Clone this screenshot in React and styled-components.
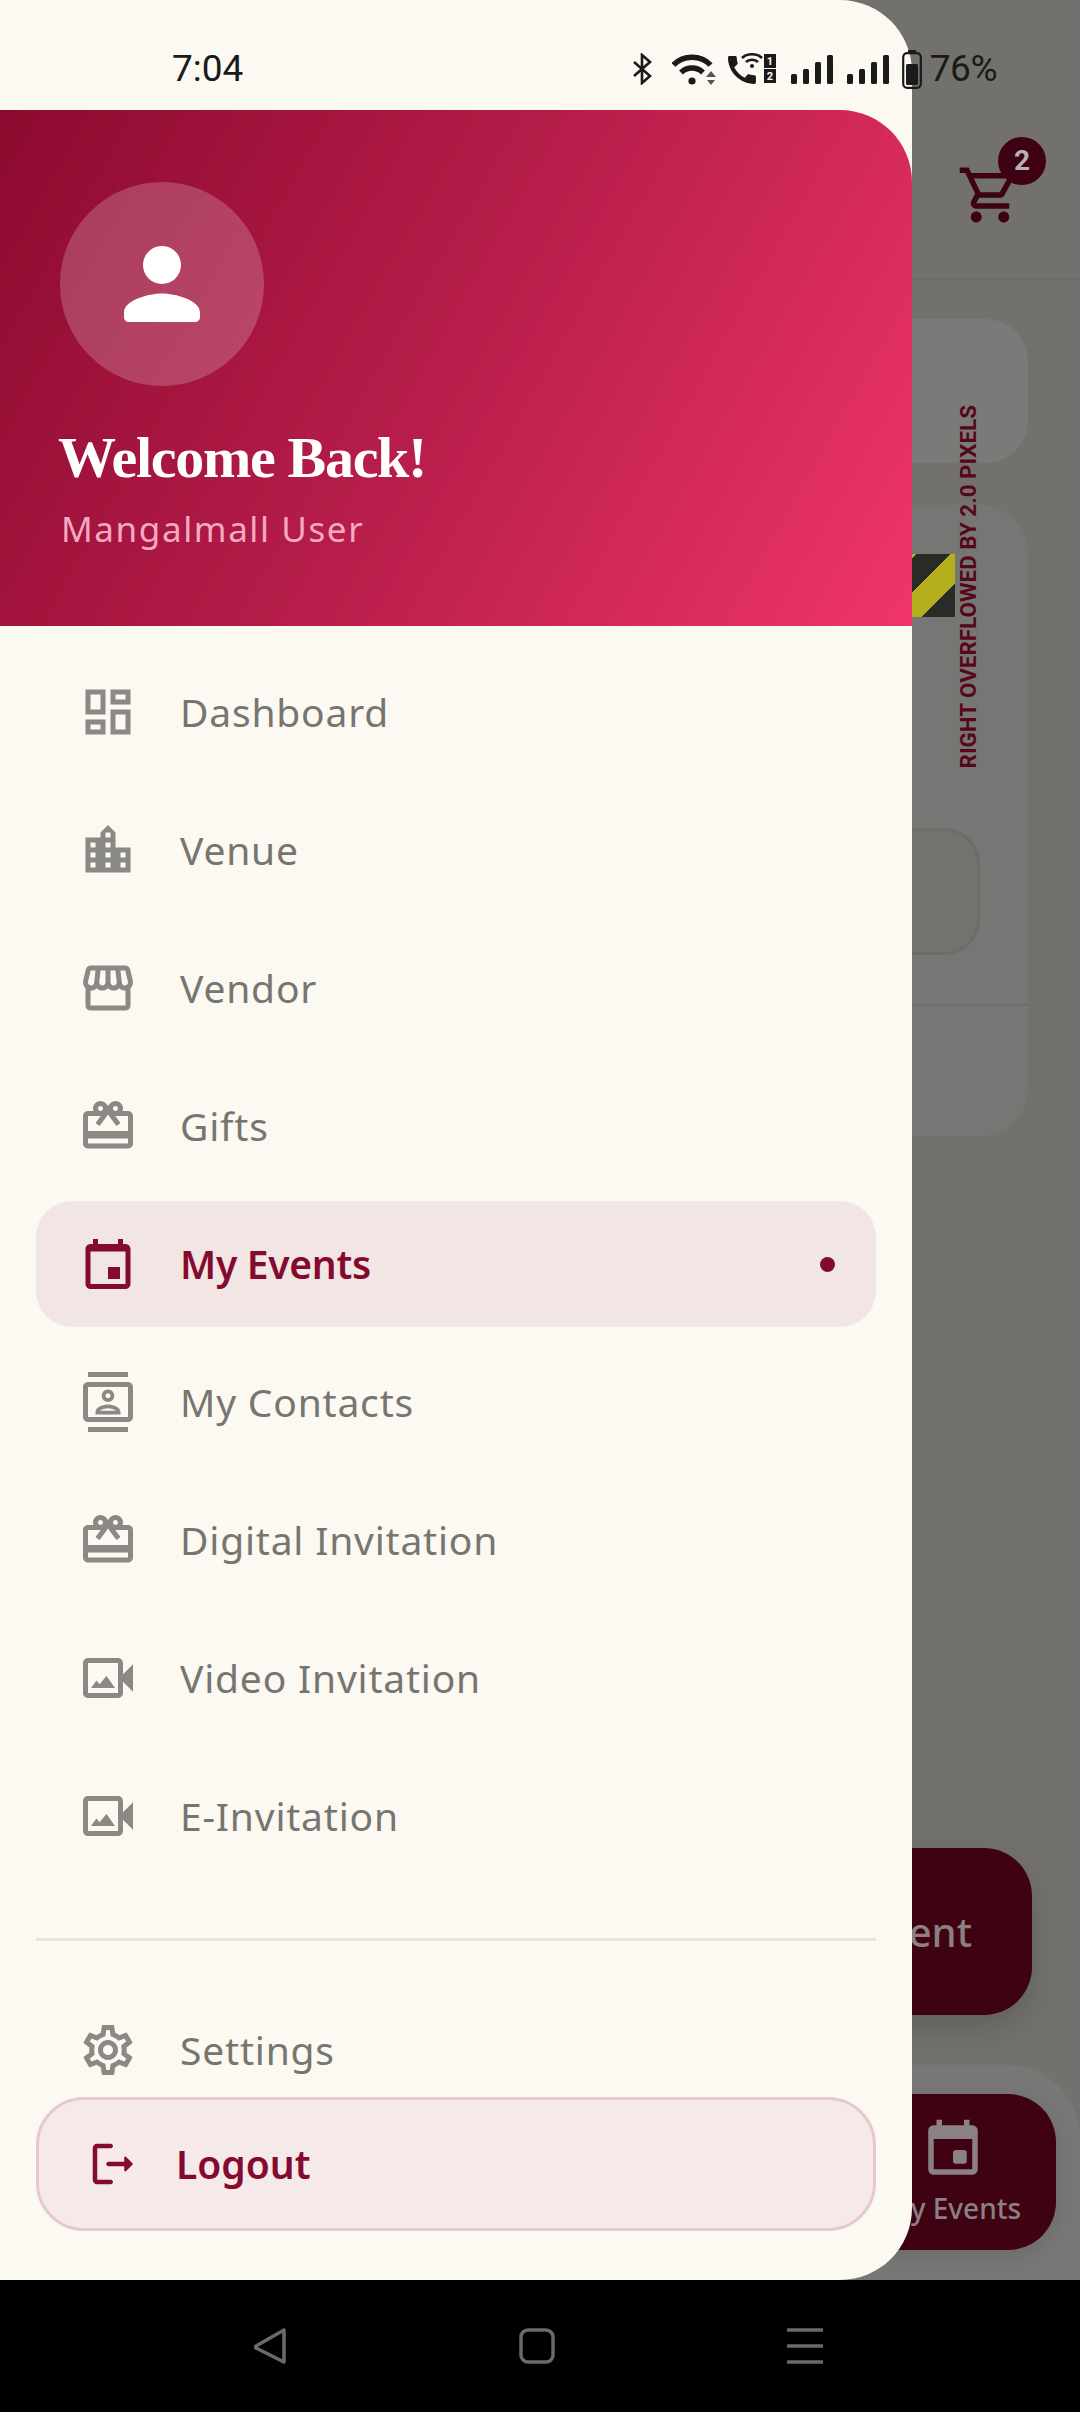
import React from "react";
import styled, { createGlobalStyle } from "styled-components";

const GlobalStyle = createGlobalStyle`
  html, body {
    margin: 0;
    padding: 0;
    background: #000;
    font-family: "Noto Sans", sans-serif;
  }
`;

const ICONS = {
  dashboard: "M19 5v2h-4V5h4M9 5v6H5V5h4m10 8v6h-4v-6h4M9 17v2H5v-2h4M21 3h-8v6h8V3zM11 3H3v10h8V3zm10 8h-8v10h8V11zm-10 4H3v6h8v-6z",
  venue: "M15 11V5l-3-3-3 3v2H3v14h18V11h-6zm-8 8H5v-2h2v2zm0-4H5v-2h2v2zm0-4H5V9h2v2zm6 8h-2v-2h2v2zm0-4h-2v-2h2v2zm0-4h-2V9h2v2zm0-4h-2V5h2v2zm6 12h-2v-2h2v2zm0-4h-2v-2h2v2z",
  store: "M21.9 8.89l-1.05-4.37c-.22-.9-1-1.52-1.91-1.52H5.05c-.9 0-1.69.63-1.9 1.52L2.1 8.89c-.24 1.02-.02 2.06.62 2.88.08.11.19.19.28.29V19c0 1.1.9 2 2 2h14c1.1 0 2-.9 2-2v-6.94c.09-.09.2-.18.28-.28.64-.82.87-1.87.62-2.89zm-2.99-3.9l1.05 4.37c.1.42.01.84-.25 1.17-.14.18-.44.47-.94.47-.61 0-1.14-.49-1.21-1.14L16.98 5l1.93-.01zM13 5h1.96l.54 4.52c.05.39-.07.78-.33 1.07-.22.26-.54.41-.95.41-.67 0-1.22-.59-1.22-1.31V5zM8.49 9.52L9.04 5H11v4.69c0 .72-.55 1.31-1.29 1.31-.34 0-.65-.15-.89-.41-.25-.29-.37-.68-.33-1.07zm-4.45-.16L5.05 5h1.97l-.58 4.86c-.08.65-.6 1.14-1.21 1.14-.49 0-.8-.29-.93-.47-.27-.32-.36-.75-.26-1.17zM5 19v-6.03c.08.01.15.03.23.03.87 0 1.66-.36 2.24-.95.6.6 1.4.95 2.31.95.87 0 1.65-.36 2.23-.93.59.57 1.39.93 2.29.93.84 0 1.64-.35 2.24-.95.58.59 1.37.95 2.24.95.08 0 .15-.02.23-.03V19H5z",
  gift: "M20 6h-2.18c.11-.31.18-.65.18-1 0-1.66-1.34-3-3-3-1.05 0-1.96.54-2.5 1.35l-.5.67-.5-.68C10.96 2.54 10.05 2 9 2 7.34 2 6 3.34 6 5c0 .35.07.69.18 1H4c-1.11 0-1.99.89-1.99 2L2 19c0 1.11.89 2 2 2h16c1.11 0 2-.89 2-2V8c0-1.11-.89-2-2-2zm-5-2c.55 0 1 .45 1 1s-.45 1-1 1-1-.45-1-1 .45-1 1-1zM9 4c.55 0 1 .45 1 1s-.45 1-1 1-1-.45-1-1 .45-1 1-1zm11 15H4v-2h16v2zm0-5H4V8h5.08L7 10.83 8.62 12 11 8.76l1-1.36 1 1.36L15.38 12 17 10.83 14.92 8H20v6z",
  event: "M16 2v2H8V2H6v2H5c-1.1 0-2 .9-2 2v14c0 1.1.9 2 2 2h14c1.1 0 2-.9 2-2V6c0-1.1-.9-2-2-2h-1V2h-2zM5 7h14v13H5V7zM12 13.2h4.8V18H12z",
  contacts: "M20 0H4v2h16V0zM4 24h16v-2H4v2zM20 4H4c-1.1 0-2 .9-2 2v12c0 1.1.9 2 2 2h16c1.1 0 2-.9 2-2V6c0-1.1-.9-2-2-2zm0 14H4V6h16v12zm-8-6c1.38 0 2.5-1.12 2.5-2.5S13.38 7 12 7 9.5 8.12 9.5 9.5 10.62 12 12 12zm0-3.5c.55 0 1 .45 1 1s-.45 1-1 1-1-.45-1-1 .45-1 1-1zm5 7.49C17 13.9 13.69 13 12 13s-5 .9-5 2.99V17h10v-1.01zm-8.19-.49c.61-.52 2.03-1 3.19-1 1.17 0 2.59.48 3.2 1H8.81z",
  video: "M18 10.48V6c0-1.1-.9-2-2-2H4c-1.1 0-2 .9-2 2v12c0 1.1.9 2 2 2h12c1.1 0 2-.9 2-2v-4.48l4 3.98v-11l-4 3.98zM16 18H4V6h12v12zM5.2 16l2.2-3 1.2 1.5 2.8-3.3 3.4 4.8z",
  settings: "M19.43 12.98c.04-.32.07-.64.07-.98 0-.34-.03-.66-.07-.98l2.11-1.65c.19-.15.24-.42.12-.64l-2-3.46c-.09-.16-.26-.25-.44-.25-.06 0-.12.01-.17.03l-2.49 1c-.52-.4-1.08-.73-1.69-.98l-.38-2.65C14.46 2.18 14.25 2 14 2h-4c-.25 0-.46.18-.49.42l-.38 2.65c-.61.25-1.17.59-1.69.98l-2.49-1c-.06-.02-.12-.03-.18-.03-.17 0-.34.09-.43.25l-2 3.46c-.13.22-.07.49.12.64l2.11 1.65c-.04.32-.07.65-.07.98 0 .33.03.66.07.98l-2.11 1.65c-.19.15-.24.42-.12.64l2 3.46c.09.16.26.25.44.25.06 0 .12-.01.17-.03l2.49-1c.52.4 1.08.73 1.69.98l.38 2.65c.03.24.24.42.49.42h4c.25 0 .46-.18.49-.42l.38-2.65c.61-.25 1.17-.59 1.69-.98l2.49 1c.06.02.12.03.18.03.17 0 .34-.09.43-.25l2-3.46c.12-.22.07-.49-.12-.64l-2.11-1.65zm-1.98-1.71c.04.31.05.52.05.73 0 .21-.02.43-.05.73l-.14 1.13.89.7 1.08.84-.7 1.21-1.27-.51-1.04-.42-.9.68c-.43.32-.84.56-1.25.73l-1.06.43-.16 1.13-.2 1.35h-1.4l-.19-1.35-.16-1.13-1.06-.43c-.43-.18-.83-.41-1.23-.71l-.91-.7-1.06.43-1.27.51-.7-1.21 1.08-.84.89-.7-.14-1.13c-.03-.31-.05-.54-.05-.74s.02-.43.05-.73l.14-1.13-.89-.7-1.08-.84.7-1.21 1.27.51 1.04.42.9-.68c.43-.32.84-.56 1.25-.73l1.06-.43.16-1.13.2-1.35h1.39l.19 1.35.16 1.13 1.06.43c.43.18.83.41 1.23.71l.91.7 1.06-.43 1.27-.51.7 1.21-1.07.85-.89.7.14 1.13zM12 8c-2.21 0-4 1.79-4 4s1.79 4 4 4 4-1.79 4-4-1.79-4-4-4zm0 6c-1.1 0-2-.9-2-2s.9-2 2-2 2 .9 2 2-.9 2-2 2z",
  person: "M12 12c2.21 0 4-1.79 4-4s-1.79-4-4-4-4 1.79-4 4 1.79 4 4 4zm0 2c-2.67 0-8 1.34-8 4v1c0 .55.45 1 1 1h14c.55 0 1-.45 1-1v-1c0-2.66-5.33-4-8-4z",
  logout: "M5 5h6c.55 0 1-.45 1-1s-.45-1-1-1H5c-1.1 0-2 .9-2 2v14c0 1.1.9 2 2 2h6c.55 0 1-.45 1-1s-.45-1-1-1H5V5zM20.65 11.65l-2.79-2.79c-.32-.32-.86-.1-.86.35V11h-7c-.55 0-1 .45-1 1s.45 1 1 1h7v1.79c0 .45.54.67.85.35l2.79-2.79c.2-.19.2-.51.01-.7z",
  cart: "M15.55 13c.75 0 1.41-.41 1.75-1.03l3.58-6.49c.37-.66-.11-1.48-.87-1.48H5.21l-.94-2H1v2h2l3.6 7.59-1.35 2.44C4.52 15.37 5.48 17 7 17h12v-2H7l1.1-2h7.45zM6.16 6h12.15l-2.76 5H8.53L6.16 6zM7 18c-1.1 0-1.99.9-1.99 2S5.9 22 7 22s2-.9 2-2-.9-2-2-2zm10 0c-1.1 0-1.99.9-1.99 2s.89 2 1.99 2 2-.9 2-2-.9-2-2-2z",
  phone: "M20.01 15.38c-1.23 0-2.42-.2-3.53-.56-.35-.12-.74-.03-1.01.24l-1.57 1.97c-2.83-1.35-5.48-3.9-6.89-6.83l1.95-1.66c.27-.28.35-.67.24-1.02-.37-1.11-.56-2.3-.56-3.53 0-.54-.45-.99-.99-.99H4.19C3.65 3 3 3.24 3 3.99 3 13.28 10.73 21 20.01 21c.71 0 .99-.63.99-1.18v-3.45c0-.54-.45-.99-.99-.99z",
};

const MENU = [
  { label: "Dashboard", icon: "dashboard" },
  { label: "Venue", icon: "venue" },
  { label: "Vendor", icon: "store" },
  { label: "Gifts", icon: "gift" },
  { label: "My Events", icon: "event", active: true },
  { label: "My Contacts", icon: "contacts" },
  { label: "Digital Invitation", icon: "gift" },
  { label: "Video Invitation", icon: "video" },
  { label: "E-Invitation", icon: "video" },
];

const SIGNAL_BARS = [10, 15, 22, 29];

const Screen = styled.div`
  position: relative;
  width: 1080px;
  height: 2412px;
  overflow: hidden;
  display: flex;
  flex-direction: column;
`;

/* page under the drawer */
const Backdrop = styled.div`
  height: 2280px;
  background: #72716d;
  display: flex;
  flex-direction: column;
`;
const TopBar = styled.div`
  height: 280px;
  border-bottom: 2px solid #6c6b67;
  flex-shrink: 0;
  display: flex;
  justify-content: flex-end;
  padding: 162px 57px 0 0;
  box-sizing: border-box;
`;
const CartBox = styled.div`
  position: relative;
  width: 66px;
  height: 66px;
`;
const CartIcon = styled.svg`
  display: block;
  width: 66px;
  height: 66px;
  fill: #3f0213;
`;
const Badge = styled.span`
  position: absolute;
  left: 41px;
  top: -25px;
  width: 48px;
  height: 48px;
  border-radius: 50%;
  background: #3f0213;
  color: #b5b3b1;
  font: 700 28px/48px "Roboto", sans-serif;
  text-align: center;
`;
const Cards = styled.div`
  display: flex;
  flex-direction: column;
  align-items: flex-end;
  gap: 42px;
  padding: 39px 52px 0 0;
`;
const SmallCard = styled.div`
  width: 900px;
  height: 144px;
  border-radius: 42px;
  background: #7a7a78;
`;
const BigCard = styled.div`
  position: relative;
  width: 900px;
  height: 631px;
  border-radius: 48px;
  background: #767674;
  display: flex;
  flex-direction: column;
  align-items: flex-end;
`;
const InputBox = styled.div`
  width: 800px;
  height: 127px;
  margin: 323px 48px 0 0;
  border: 3px solid #6d6c69;
  border-radius: 36px;
  box-sizing: border-box;
  background: #73726f;
`;
const CardLine = styled.div`
  align-self: stretch;
  height: 2px;
  margin-top: 49px;
  background: #6e6d6a;
`;
const Stripes = styled.div`
  position: absolute;
  right: 73px;
  top: 49px;
  width: 120px;
  height: 63px;
  background: repeating-linear-gradient(
    -45deg,
    #2a2a26 0 24px,
    #b3af1c 24px 48px
  );
`;
const OverflowText = styled.span`
  position: absolute;
  right: 49px;
  bottom: 368px;
  writing-mode: vertical-rl;
  transform: rotate(180deg);
  color: #560819;
  font: 700 22.4px/22px "Roboto", sans-serif;
  white-space: nowrap;
`;
const Filler = styled.div`
  flex: 1;
`;
const Fab = styled.div`
  align-self: flex-end;
  width: 360px;
  height: 167px;
  margin: 0 48px 50px 0;
  padding-right: 60px;
  box-sizing: border-box;
  border-radius: 48px;
  background: #3f0213;
  box-shadow: 0 14px 30px rgba(0, 0, 0, 0.14);
  color: #8b7f81;
  font: 500 40px/167px "Noto Sans", sans-serif;
  text-align: right;
  white-space: nowrap;
`;
const BottomBand = styled.div`
  height: 215px;
  flex-shrink: 0;
  box-sizing: border-box;
  padding: 29px 24px 30px 0;
  border-top-right-radius: 72px;
  background: #777776;
  display: flex;
  justify-content: flex-end;
`;
const NavTile = styled.div`
  width: 206px;
  border-radius: 48px;
  background: #3f0213;
  box-shadow: 0 6px 20px rgba(0, 0, 0, 0.1);
  display: flex;
  flex-direction: column;
  align-items: center;
  padding-top: 23px;
  box-sizing: border-box;
  color: #8b8084;
`;
const NavTileIcon = styled.svg`
  display: block;
  flex-shrink: 0;
  width: 66px;
  height: 66px;
  fill: #8b8084;
`;
const NavTileLabel = styled.span`
  margin-top: 5px;
  font: 500 28px/40px "Noto Sans", sans-serif;
  white-space: nowrap;
`;

/* android nav bar */
const SystemNav = styled.div`
  height: 132px;
  flex-shrink: 0;
  background: #000;
  display: flex;
  align-items: flex-start;
  padding: 48px 0 0 253px;
  gap: 232px;
  box-sizing: border-box;
`;
const SystemIcon = styled.svg`
  display: block;
  height: 36px;
  fill: none;
  stroke: #6a6a6a;
  stroke-width: 3.5;
`;

/* drawer */
const Drawer = styled.aside`
  position: absolute;
  left: 0;
  top: 0;
  width: 912px;
  height: 2280px;
  border-radius: 0 72px 72px 0;
  background: #fcf8f2;
  display: flex;
  flex-direction: column;
  overflow: hidden;
  padding-top: 110px;
  box-sizing: border-box;
`;
const Header = styled.header`
  height: 516px;
  flex-shrink: 0;
  box-sizing: border-box;
  padding: 72px 0 0 60px;
  border-top-right-radius: 72px;
  background: linear-gradient(119.5deg, #8c0a2f 0%, #b81e4b 50%, #f0356a 100%);
`;
const Avatar = styled.div`
  width: 204px;
  height: 204px;
  border-radius: 50%;
  background: rgba(255, 255, 255, 0.2);
  display: flex;
  align-items: center;
  justify-content: center;
`;
const AvatarIcon = styled.svg`
  width: 114px;
  height: 114px;
  fill: #fff;
`;
const Welcome = styled.h1`
  margin: 36px 0 0 -2px;
  color: #fff;
  font: 700 58px/72px "Liberation Serif", serif;
  letter-spacing: -1.3px;
`;
const UserName = styled.p`
  margin: 11px 0 0 1px;
  color: #f5aac4;
  font: 400 35px/48px "Noto Sans", sans-serif;
  letter-spacing: 1.6px;
`;
const MenuList = styled.nav`
  flex: 1;
  min-height: 0;
  overflow: hidden;
  padding: 23px 36px 0;
  display: flex;
  flex-direction: column;
  gap: 12px;
`;
const MenuRow = styled.div`
  height: 126px;
  flex-shrink: 0;
  display: flex;
  align-items: center;
  padding: 0 42px;
  gap: 42px;
  border-radius: 36px;
  background: ${(p) => (p.$active ? "#f1e6e3" : "transparent")};
  color: ${(p) => (p.$active ? "#850a2f" : "#77756f")};
  font: ${(p) => (p.$active ? 600 : 400)} 39px/50px "Noto Sans", sans-serif;
  letter-spacing: ${(p) => (p.$active ? -0.3 : 0.8)}px;
`;
const MenuIcon = styled.svg`
  width: 60px;
  height: 60px;
  flex-shrink: 0;
  fill: ${(p) => (p.$active ? "#850a2f" : "#8a8983")};
`;
const MenuLabel = styled.span`
  flex: 1;
  white-space: nowrap;
`;
const ActiveDot = styled.span`
  width: 15px;
  height: 15px;
  margin-right: -1px;
  border-radius: 50%;
  background: #850a2f;
`;
const Divider = styled.div`
  height: 3px;
  flex-shrink: 0;
  margin: 47px 0 34px;
  background: #efe1dd;
`;
const LogoutBox = styled.div`
  flex-shrink: 0;
  height: 134px;
  margin: 0 36px 49px;
  padding-left: 47px;
  display: flex;
  align-items: center;
  gap: 36px;
  box-sizing: border-box;
  border: 3px solid #e6c9cd;
  border-radius: 48px;
  background: #f5e9ea;
  color: #850a2f;
  font: 600 39px/50px "Noto Sans", sans-serif;
`;
const LogoutIcon = styled.svg`
  width: 54px;
  height: 54px;
  fill: #850a2f;
`;

/* status bar sits on top of drawer and scrim */
const StatusBar = styled.div`
  position: absolute;
  left: 172px;
  right: 83px;
  top: 46px;
  height: 46px;
  display: flex;
  align-items: center;
  justify-content: space-between;
  color: #1a1a1a;
  font: 400 37px/46px "Roboto", sans-serif;
`;
const StatusIcons = styled.div`
  display: flex;
  align-items: center;
`;
const StatusIcon = styled.svg`
  display: block;
  flex-shrink: 0;
  margin-left: ${(p) => p.$gap || 0}px;
  fill: #1a1a1a;
`;
const Percent = styled.span`
  margin-left: 8px;
  letter-spacing: -0.5px;
`;

function Signal({ gap }) {
  return (
    <StatusIcon $gap={gap} width="42" height="30" viewBox="0 0 42 30">
      {SIGNAL_BARS.map((h, i) => (
        <rect key={i} x={i * 12} y={30 - h} width="6" height={h} rx="1.5" />
      ))}
    </StatusIcon>
  );
}

export default function App() {
  return (
    <Screen>
      <GlobalStyle />
      <Backdrop>
        <TopBar>
          <CartBox>
            <CartIcon viewBox="0 0 24 24">
              <path d={ICONS.cart} />
            </CartIcon>
            <Badge>2</Badge>
          </CartBox>
        </TopBar>
        <Cards>
          <SmallCard />
          <BigCard>
            <Stripes />
            <OverflowText>RIGHT OVERFLOWED BY 2.0 PIXELS</OverflowText>
            <InputBox />
            <CardLine />
          </BigCard>
        </Cards>
        <Filler />
        <Fab>Create Event</Fab>
        <BottomBand>
          <NavTile>
            <NavTileIcon viewBox="0 0 24 24">
              <path d="M16 1v2H8V1H6v2H5c-1.1 0-2 .9-2 2v14c0 1.1.9 2 2 2h14c1.1 0 2-.9 2-2V5c0-1.1-.9-2-2-2h-1V1h-2zM5 8h14v11H5V8z" />
              <rect x="12" y="12" width="5" height="5" rx="1" />
            </NavTileIcon>
            <NavTileLabel>My Events</NavTileLabel>
          </NavTile>
        </BottomBand>
      </Backdrop>

      <SystemNav>
        <SystemIcon width="34" viewBox="0 0 34 36">
          <path d="M31 2 L3 18 Q2 19 3 20 L31 34 Z" strokeLinejoin="round" />
        </SystemIcon>
        <SystemIcon width="36" viewBox="0 0 36 36">
          <rect x="2" y="2" width="32" height="32" rx="7" />
        </SystemIcon>
        <SystemIcon width="36" viewBox="0 0 36 36">
          <path d="M0 2H36M0 18H36M0 34H36" />
        </SystemIcon>
      </SystemNav>

      <Drawer>
        <Header>
          <Avatar>
            <AvatarIcon viewBox="0 0 24 24">
              <path d={ICONS.person} />
            </AvatarIcon>
          </Avatar>
          <Welcome>Welcome Back!</Welcome>
          <UserName>Mangalmall User</UserName>
        </Header>
        <MenuList>
          {MENU.map((item) => (
            <MenuRow key={item.label} $active={item.active}>
              <MenuIcon viewBox="0 0 24 24" $active={item.active}>
                <path d={ICONS[item.icon]} />
              </MenuIcon>
              <MenuLabel>{item.label}</MenuLabel>
              {item.active && <ActiveDot />}
            </MenuRow>
          ))}
          <Divider />
          <MenuRow>
            <MenuIcon viewBox="0 0 24 24">
              <path d={ICONS.settings} />
            </MenuIcon>
            <MenuLabel>Settings</MenuLabel>
          </MenuRow>
        </MenuList>
        <LogoutBox>
          <LogoutIcon viewBox="0 0 24 24">
            <path d={ICONS.logout} />
          </LogoutIcon>
          Logout
        </LogoutBox>
      </Drawer>

      <StatusBar>
        <span>7:04</span>
        <StatusIcons>
          <StatusIcon width="20" height="32" viewBox="0 0 20 32">
            <path d="M2 9 L18 23 L10 30 V2 L18 9 L2 23" fill="none" stroke="#1a1a1a" strokeWidth="2.6" />
          </StatusIcon>
          <StatusIcon $gap={20} width="44" height="32" viewBox="0 0 44 32">
            <path d="M1.5 12 C11 1.5 29 1.5 38.5 12" fill="none" stroke="#1a1a1a" strokeWidth="5.5" />
            <path d="M9 19.5 C15 13.5 25 13.5 31 19.5" fill="none" stroke="#1a1a1a" strokeWidth="5.5" />
            <circle cx="20" cy="28" r="3.6" />
            <path d="M39 18 l5 6 h-10z M39 32 l4 -5 h-8z" fill="#555" />
          </StatusIcon>
          <StatusIcon $gap={12} width="48" height="32" viewBox="0 0 48 32">
            <g transform="translate(-4.65 -1.65) scale(1.55)">
              <path d={ICONS.phone} />
            </g>
            <path d="M14 5 C19 0 29 0 34 5" fill="none" stroke="#1a1a1a" strokeWidth="2.6" />
            <path d="M18 9 C21 6 27 6 30 9" fill="none" stroke="#1a1a1a" strokeWidth="2.6" />
            <circle cx="24" cy="13" r="2" />
            <rect x="36" y="1" width="12" height="14" />
            <rect x="36" y="16" width="12" height="14" />
            <text x="42" y="12" fill="#fcf8f2" fontSize="11" fontWeight="700" textAnchor="middle" fontFamily="Roboto, sans-serif">1</text>
            <text x="42" y="27" fill="#fcf8f2" fontSize="11" fontWeight="700" textAnchor="middle" fontFamily="Roboto, sans-serif">2</text>
          </StatusIcon>
          <Signal gap={15} />
          <Signal gap={14} />
          <StatusIcon $gap={13} width="20" height="39" viewBox="0 0 20 39">
            <rect x="6" y="0" width="8" height="2" />
            <rect x="1.2" y="3.2" width="17.6" height="34.6" rx="4" fill="none" stroke="#1a1a1a" strokeWidth="2.2" />
            <rect x="4" y="14" width="12" height="21" rx="1.5" />
          </StatusIcon>
          <Percent>76%</Percent>
        </StatusIcons>
      </StatusBar>
    </Screen>
  );
}
